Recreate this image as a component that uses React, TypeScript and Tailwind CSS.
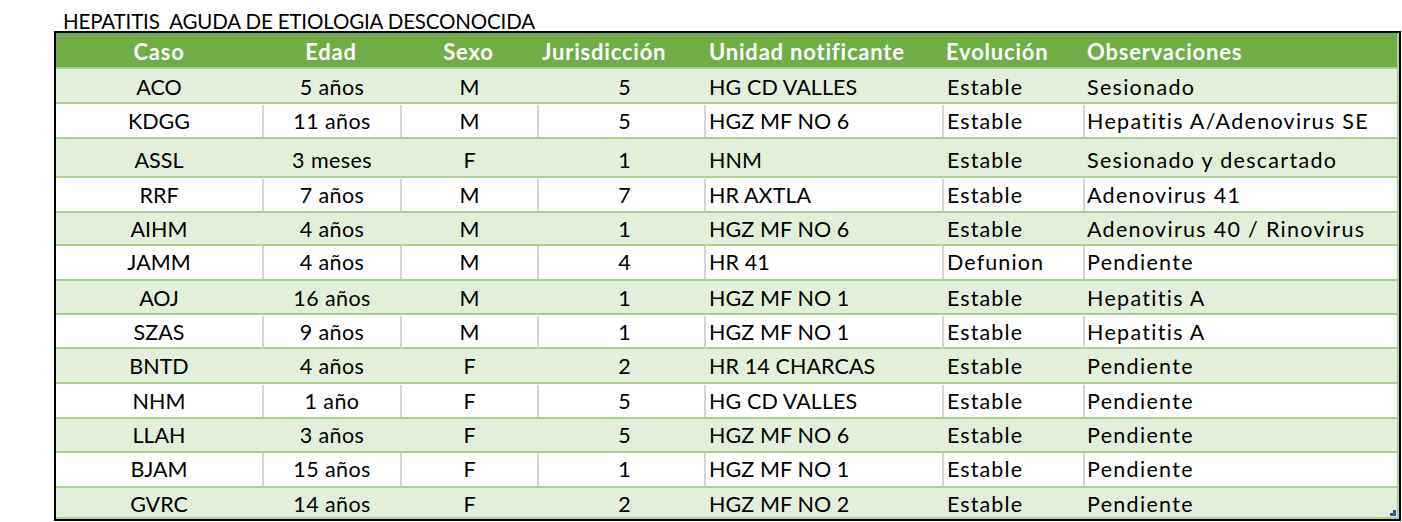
const cols = "grid grid-cols-[206px_138px_137px_167px_238px_141px_314px]"

type Row = {
  caso: string
  edad: string
  sexo: string
  juris: string
  unidad: string
  evol: string
  obs: string
  h: string
}

const rows: Row[] = [
  { caso: "ACO", edad: "5 años", sexo: "M", juris: "5", unidad: "HG CD VALLES", evol: "Estable", obs: "Sesionado", h: "h-[35px] pt-[2px]" },
  { caso: "KDGG", edad: "11 años", sexo: "M", juris: "5", unidad: "HGZ MF NO 6", evol: "Estable", obs: "Hepatitis A/Adenovirus SE", h: "h-[35px] pt-[1px]" },
  { caso: "ASSL", edad: "3 meses", sexo: "F", juris: "1", unidad: "HNM", evol: "Estable", obs: "Sesionado y descartado", h: "h-[39px] pt-[5px]" },
  { caso: "RRF", edad: "7 años", sexo: "M", juris: "7", unidad: "HR AXTLA", evol: "Estable", obs: "Adenovirus 41", h: "h-[35px] pt-[1px]" },
  { caso: "AIHM", edad: "4 años", sexo: "M", juris: "1", unidad: "HGZ MF NO 6", evol: "Estable", obs: "Adenovirus 40 / Rinovirus", h: "h-[33px]" },
  { caso: "JAMM", edad: "4 años", sexo: "M", juris: "4", unidad: "HR 41", evol: "Defunion", obs: "Pendiente", h: "h-[35px]" },
  { caso: "AOJ", edad: "16 años", sexo: "M", juris: "1", unidad: "HGZ MF NO 1", evol: "Estable", obs: "Hepatitis A", h: "h-[34px] pt-[1px]" },
  { caso: "SZAS", edad: "9 años", sexo: "M", juris: "1", unidad: "HGZ MF NO 1", evol: "Estable", obs: "Hepatitis A", h: "h-[34px] pt-[1px]" },
  { caso: "BNTD", edad: "4 años", sexo: "F", juris: "2", unidad: "HR 14 CHARCAS", evol: "Estable", obs: "Pendiente", h: "h-[35px] pt-[1px]" },
  { caso: "NHM", edad: "1 año", sexo: "F", juris: "5", unidad: "HG CD VALLES", evol: "Estable", obs: "Pendiente", h: "h-[35px] pt-[1px]" },
  { caso: "LLAH", edad: "3 años", sexo: "F", juris: "5", unidad: "HGZ MF NO 6", evol: "Estable", obs: "Pendiente", h: "h-[34px]" },
  { caso: "BJAM", edad: "15 años", sexo: "F", juris: "1", unidad: "HGZ MF NO 1", evol: "Estable", obs: "Pendiente", h: "h-[35px]" },
  { caso: "GVRC", edad: "14 años", sexo: "F", juris: "2", unidad: "HGZ MF NO 2", evol: "Estable", obs: "Pendiente", h: "h-[33px] border-b-2" },
]

function DataRow({ row, striped }: { row: Row; striped: boolean }) {
  // white rows show Excel's grey gridlines, banded rows don't
  const sep = striped ? "border-l-2 border-transparent" : "border-l-2 border-[#d4d4d4]"
  return (
    <div className={`${cols} ${row.h} border-t-2 border-[#a9d08e] ${striped ? "bg-[#e2efda]" : "bg-white"}`}>
      <div className="flex items-center justify-center">{row.caso}</div>
      <div className={`flex items-center justify-center tracking-[0.4px] ${sep}`}>{row.edad}</div>
      <div className={`flex items-center justify-center ${sep}`}>{row.sexo}</div>
      <div className={`flex items-center justify-center pl-[6px] ${sep}`}>{row.juris}</div>
      <div className={`flex items-center pl-[3px] tracking-[0.1px] ${sep}`}>{row.unidad}</div>
      <div className={`flex items-center pl-[3px] tracking-[1.1px] ${sep}`}>{row.evol}</div>
      <div className={`flex items-center pl-[2px] tracking-[1.3px] ${sep}`}>{row.obs}</div>
    </div>
  )
}

export default function App() {
  return (
    <div className="w-[1402px] h-[522px] bg-white font-['Lato','Liberation_Sans',sans-serif] text-black">
      <div className="h-[31px] pl-[63px] pt-[10px] text-[20.5px] leading-[22px] tracking-[-0.15px] whitespace-pre">
        HEPATITIS  AGUDA DE ETIOLOGIA DESCONOCIDA
      </div>
      <div className="relative ml-[54px] w-[1347px] border-2 border-black">
        <div className="border-r-2 border-[#a9d08e] text-[21.5px]">
          <div className={`${cols} h-[34px] bg-[#70ad47] text-white font-bold text-[22px] tracking-[0.8px]`}>
            <div className="flex items-center justify-center pt-[2px]">Caso</div>
            <div className="flex items-center justify-center pt-[2px]">Edad</div>
            <div className="flex items-center justify-center pt-[2px]">Sexo</div>
            <div className="flex items-center pl-[5px] pt-[2px]">Jurisdicción</div>
            <div className="flex items-center pl-[5px] pt-[2px]">Unidad notificante</div>
            <div className="flex items-center pl-[4px] pt-[2px]">Evolución</div>
            <div className="flex items-center pl-[4px] pt-[2px]">Observaciones</div>
          </div>
          {rows.map((r, i) => (
            <DataRow key={r.caso} row={r} striped={i % 2 === 0} />
          ))}
        </div>
        <svg className="absolute right-[3px] bottom-[3px]" width="6" height="6" viewBox="0 0 6 6">
          <path d="M6 0V6H0V3H3V0Z" fill="#2f5597" />
        </svg>
      </div>
    </div>
  )
}
